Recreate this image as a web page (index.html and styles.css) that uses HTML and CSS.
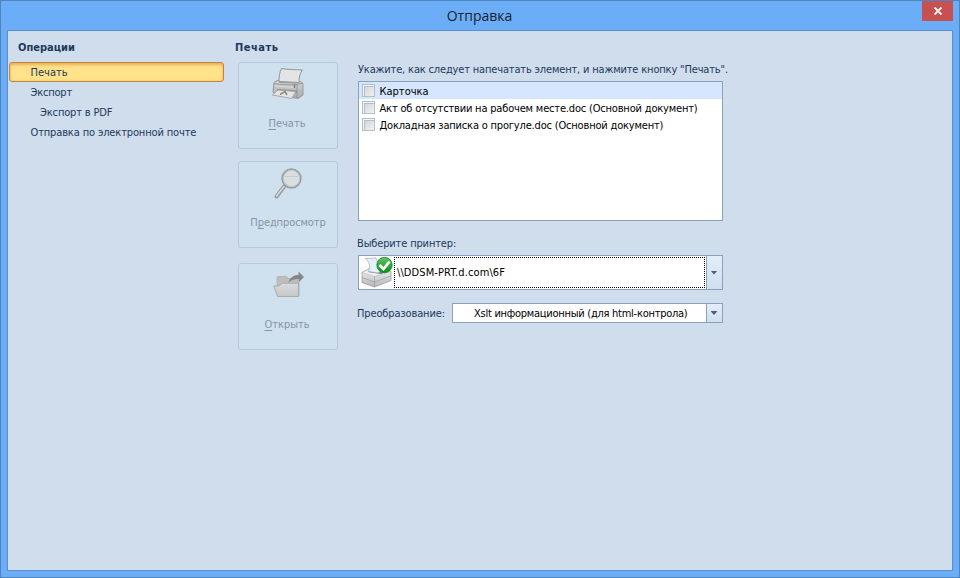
FILE: index.html
```
<!DOCTYPE html>
<html lang="ru">
<head>
<meta charset="utf-8">
<title>Отправка</title>
<link rel="stylesheet" href="styles.css">
</head>
<body>
<div class="window">
  <header class="titlebar">
    <h1>Отправка</h1>
    <button class="close" aria-label="Закрыть"><svg width="8" height="8" viewBox="0 0 8 8"><path d="M.6.5 7.4 7.5M7.4.5.6 7.5" stroke="#fff" stroke-width="1.8"/></svg></button>
  </header>
  <main class="client">
    <nav class="operations">
      <h2><span class="t-ops">Операции</span></h2>
      <ul>
        <li class="selected"><span class="t-print">Печать</span></li>
        <li><span class="t-export">Экспорт</span></li>
        <li class="nested"><span class="t-pdf">Экспорт в PDF</span></li>
        <li><span class="t-mail">Отправка по электронной почте</span></li>
      </ul>
    </nav>
    <section class="actions">
      <h2><span class="t-head">Печать</span></h2>
      <button class="action">
        <svg width="34" height="34" viewBox="0 0 34 34">
          <defs>
            <linearGradient id="pg" x1="0" y1="0" x2="0" y2="1"><stop offset="0" stop-color="#d2d3d4"/><stop offset="1" stop-color="#a9aaab"/></linearGradient>
          </defs>
          <path d="M10.500 1.500c7 1.200 14 1.200 21 1.500-2.500 3-3.500 7-3.500 12.500L8 14.500c0-5 .5-9 2.500-13z" fill="#e3e4e5" stroke="#929495"/>
          <path d="M3 15.500 6 13.500l2.500.5v1.500l19 .5 1-1.500 2 .5 1.500 2v11L27 31.500 4 28 2 25z" fill="url(#pg)" stroke="#98999a"/>
          <path d="M3 16.500c7 1.500 16 1.500 23 1V31M26 17.500l6-1.500" fill="none" stroke="#8f9192" stroke-width=".8"/>
          <path d="M4 19l20 1.500" stroke="#dcdcdc"/>
          <path d="M6 22 26 23.500V26L8 25z" fill="#8b8d8e"/>
          <path d="M7 23 25 24.500l-4.500 7L1.500 28z" fill="#e5e5e5" stroke="#999b9c" stroke-width=".8"/>
          <path d="m9 27.500 5-3 2 3.500" fill="none" stroke="#8a8a8a" stroke-width="1.600"/>
          <path d="M23.500 17.500v3.500" stroke="#777" stroke-width="1.300"/>
        </svg>
        <span class="b-print"><u>П</u>ечать</span>
      </button>
      <button class="action">
        <svg width="34" height="34" viewBox="0 0 34 34">
          <path d="M13.500 20 5.500 30.500" stroke="#969a9c" stroke-width="4" stroke-linecap="round"/>
          <path d="M13 20.500 5.500 30" stroke="#d8dadb" stroke-width="1.600" stroke-linecap="round"/>
          <circle cx="20.500" cy="12.500" r="9.300" fill="#dadedf" stroke="#9b9fa1" stroke-width="1.800"/>
          <circle cx="20.500" cy="12.500" r="8.100" fill="none" stroke="#c3c7c9" stroke-width="1"/>
          <path d="M14 10.500h13" stroke="#c5cdd1"/>
        </svg>
        <span class="b-preview">П<u>р</u>едпросмотр</span>
      </button>
      <button class="action">
        <svg width="34" height="34" viewBox="0 0 34 34">
          <defs><linearGradient id="fg" x1="0" y1="0" x2="0" y2="1"><stop offset="0" stop-color="#dadbdc"/><stop offset="1" stop-color="#c6c7c8"/></linearGradient></defs>
          <g transform="translate(1 3)">
            <path d="M5 9.500V6.500q0-1 1-1h8.500l2 2H26q1 0 1 1V25H6z" fill="#bbbdbe" stroke="#b3b5b6"/>
            <path d="M1.800 15h5l3.500-2.800H26.500V25.500H5.500z" fill="url(#fg)" stroke="#abadad"/>
            <path d="M16.500 11.500c1.500-5 5-7.500 10-7.500V.5l5.500 5.500L27 11V8c-4-.2-7 .5-10.500 3.500z" fill="#848788"/>
          </g>
        </svg>
        <span class="b-open"><u>О</u>ткрыть</span>
      </button>
    </section>
    <section class="settings">
      <p class="hint"><span class="t-hint">Укажите, как следует напечатать элемент, и нажмите кнопку "Печать".</span></p>
      <div class="list">
        <label class="row active"><i class="check"></i><span class="r-card">Карточка</span></label>
        <label class="row"><i class="check"></i><span class="r-act">Акт об отсутствии на рабочем месте.doc (Основной документ)</span></label>
        <label class="row"><i class="check"></i><span class="r-memo">Докладная записка о прогуле.doc (Основной документ)</span></label>
      </div>
      <p class="label"><span class="t-choose">Выберите принтер:</span></p>
      <div class="combo printer">
        <svg class="device" width="34" height="33" viewBox="0 0 34 33">
          <defs>
            <linearGradient id="dg" x1="0" y1="0" x2="0" y2="1"><stop offset="0" stop-color="#f5f5f5"/><stop offset="1" stop-color="#b4b6b8"/></linearGradient>
            <linearGradient id="ck" x1="0" y1="0" x2="0" y2="1"><stop offset="0" stop-color="#64c566"/><stop offset="1" stop-color="#078e1b"/></linearGradient>
          </defs>
          <path d="M2 16.500 10 12 31 15.500v9L14.500 31 2 26.500z" fill="url(#dg)" stroke="#909295" stroke-width=".7"/>
          <path d="m2 16.500 12.500 4 16.500-5-19-4z" fill="#f0f0f1" stroke="#b3b5b7" stroke-width=".6"/>
          <path d="m8 16 4-2.500 14 2.500-5 2z" fill="#7b7e82"/>
          <path d="M5.500 2.500 16 2l5 13-3 2-9.500-1.500C11 10 9 5.500 5.500 2.500z" fill="#e6f0fb" stroke="#9baabd" stroke-width=".7"/>
          <path d="m2 21.500 12.500 4.500L31 20M14.500 20.500V31" fill="none" stroke="#999c9f" stroke-width=".7"/>
          <circle cx="24.500" cy="9" r="7.700" fill="url(#ck)" stroke="#168d29" stroke-width=".8"/>
          <path d="m19.500 9 4 4 6-7.500" fill="none" stroke="#fff" stroke-width="2.800"/>
        </svg>
        <div class="value"><span class="v-printer">\\DDSM-PRT.d.com\6F</span></div>
        <div class="arrow"></div>
      </div>
      <div class="transform">
        <span class="caption"><span class="t-conv">Преобразование:</span></span>
        <div class="combo">
          <div class="choice"><span class="v-xslt">Xslt информационный (для html-контрола)</span></div>
          <div class="arrow"></div>
        </div>
      </div>
    </section>
  </main>
</div>
</body>
</html>
```

FILE: styles.css
```
* { box-sizing: border-box; margin: 0; padding: 0; }
body {
  font: 11px/20px "DejaVu Sans Condensed", "DejaVu Sans", sans-serif;
  font-stretch: condensed;
  color: #1e395b;
}
span { white-space: nowrap; }
button { font: inherit; color: inherit; }
.window {
  width: 960px; height: 578px;
  padding: 0 6px 6px;
  background: #6badf6;
  border: 1px solid #4e84be;
  display: flex; flex-direction: column;
}
.titlebar { height: 29px; display: grid; grid-template-columns: 1fr 31px 1fr; flex: none; }
.titlebar h1 {
  grid-column: 1 / 4; grid-row: 1;
  text-align: center; text-indent: -1px;
  font: 14px/29px "Open Sans", "Noto Sans", sans-serif;
  color: #18222e;
}
.close {
  grid-column: 1 / 4; grid-row: 1; justify-self: end;
  width: 31px; height: 20px;
  border: 0; background: #c75050;
  display: flex; align-items: center; justify-content: center;
}
.client {
  flex: 1; display: flex;
  background: #cfdded;
  border: 1px solid #5a90cb;
}
h2 { font-size: 11px; line-height: 22px; height: 25px; font-weight: bold; }
.operations { width: 216px; padding: 6px 0 0 1px; }
.operations h2 { padding-left: 9px; }
ul { list-style: none; }
li { height: 20px; padding-left: 21.500px; line-height: 22px; }
.nested { padding-left: 31px; }
.selected {
  padding-left: 20.500px; line-height: 20px;
  border: 1px solid #c2873c; border-radius: 3px;
  background: #ffe28a;
  box-shadow: inset 0 2px 3px #e9b25c, inset 0 0 2px #edbd67;
}
.t-export { letter-spacing: -.2px; }
.t-pdf { letter-spacing: -.15px; }
.t-mail { letter-spacing: -.14px; }
.t-head { letter-spacing: .5px; }
.t-hint { letter-spacing: -.165px; }
.r-act { letter-spacing: -.18px; }
.r-memo { letter-spacing: -.18px; }
.t-choose { letter-spacing: -.15px; }
.v-printer { letter-spacing: .1px; }
.t-conv { letter-spacing: -.13px; }
.v-xslt { letter-spacing: -.26px; }
.actions { width: 114px; padding: 6px 0 0 11px; display: flex; flex-direction: column; }
.action {
  width: 100px; height: 87px; margin: 0 0 14px 3px;
  border: 1px solid #b7cadd; border-radius: 3px;
  background: #cfe0ef;
  color: #8894a5;
  display: flex; flex-direction: column; align-items: center;
  padding-top: 4px;
}
.action + .action { margin-top: -2px; }
.action:last-child { margin-top: 1px; }
.action span { line-height: 20px; margin-top: 13px; padding-right: 2px; }
.action .b-preview { padding-right: 0; letter-spacing: -.1px; }
.action u { text-underline-offset: 2px; }
.settings { width: 385px; padding: 28px 0 0 20px; }
.hint, .label { height: 20px; line-height: 22px; }
.hint { margin-bottom: 2px; }
.list { width: 365px; height: 140px; border: 1px solid #8ba0bc; background: #fff; color: #000; }
.row { display: flex; height: 17px; align-items: center; padding-left: 3px; }
.row span { line-height: 16px; padding-top: 2px; }
.active { background: #d5e6fe; height: 17px; }
.check {
  width: 13px; height: 13px; margin-right: 4.500px;
  border: 1px solid #abbfdb; padding: 1px;
  background: #f3f6fa;
}
.check::before {
  content: ""; display: block; width: 9px; height: 9px;
  border: 1px solid #b8bec7; background: linear-gradient(135deg, #d4d7dc, #f2f2f3);
}
.label { margin: 12px 0 2px; }
.t-choose, .t-conv { margin-left: -1px; }
.combo { display: flex; width: 365px; height: 35px; border: 1px solid #8ba0bc; background: #fff; color: #000; }
.device { margin-left: 1px; flex: none; }
.value { flex: 1; margin: 1px 1px 1px 0; border: 1px dotted #000; line-height: 29px; padding-left: 2px; }
.arrow {
  width: 17px; margin-right: -1px; padding-right: 1px; flex: none;
  border-left: 1px solid #8ba0bc;
  background: linear-gradient(#e2eefa, #cfdfee) content-box;
  display: flex; align-items: center; justify-content: center;
}
.arrow::before {
  content: ""; width: 7px; height: 4px; margin-right: 1px;
  background: #4b5d80;
  clip-path: polygon(0 0, 100% 0, 50% 100%);
}
.transform { display: flex; width: 365px; margin-top: 13px; }
.caption { width: 94px; flex: none; line-height: 21px; }
.transform .combo { width: 271px; height: 20px; }
.choice { flex: 1; line-height: 20px; padding-left: 21px; }
```
